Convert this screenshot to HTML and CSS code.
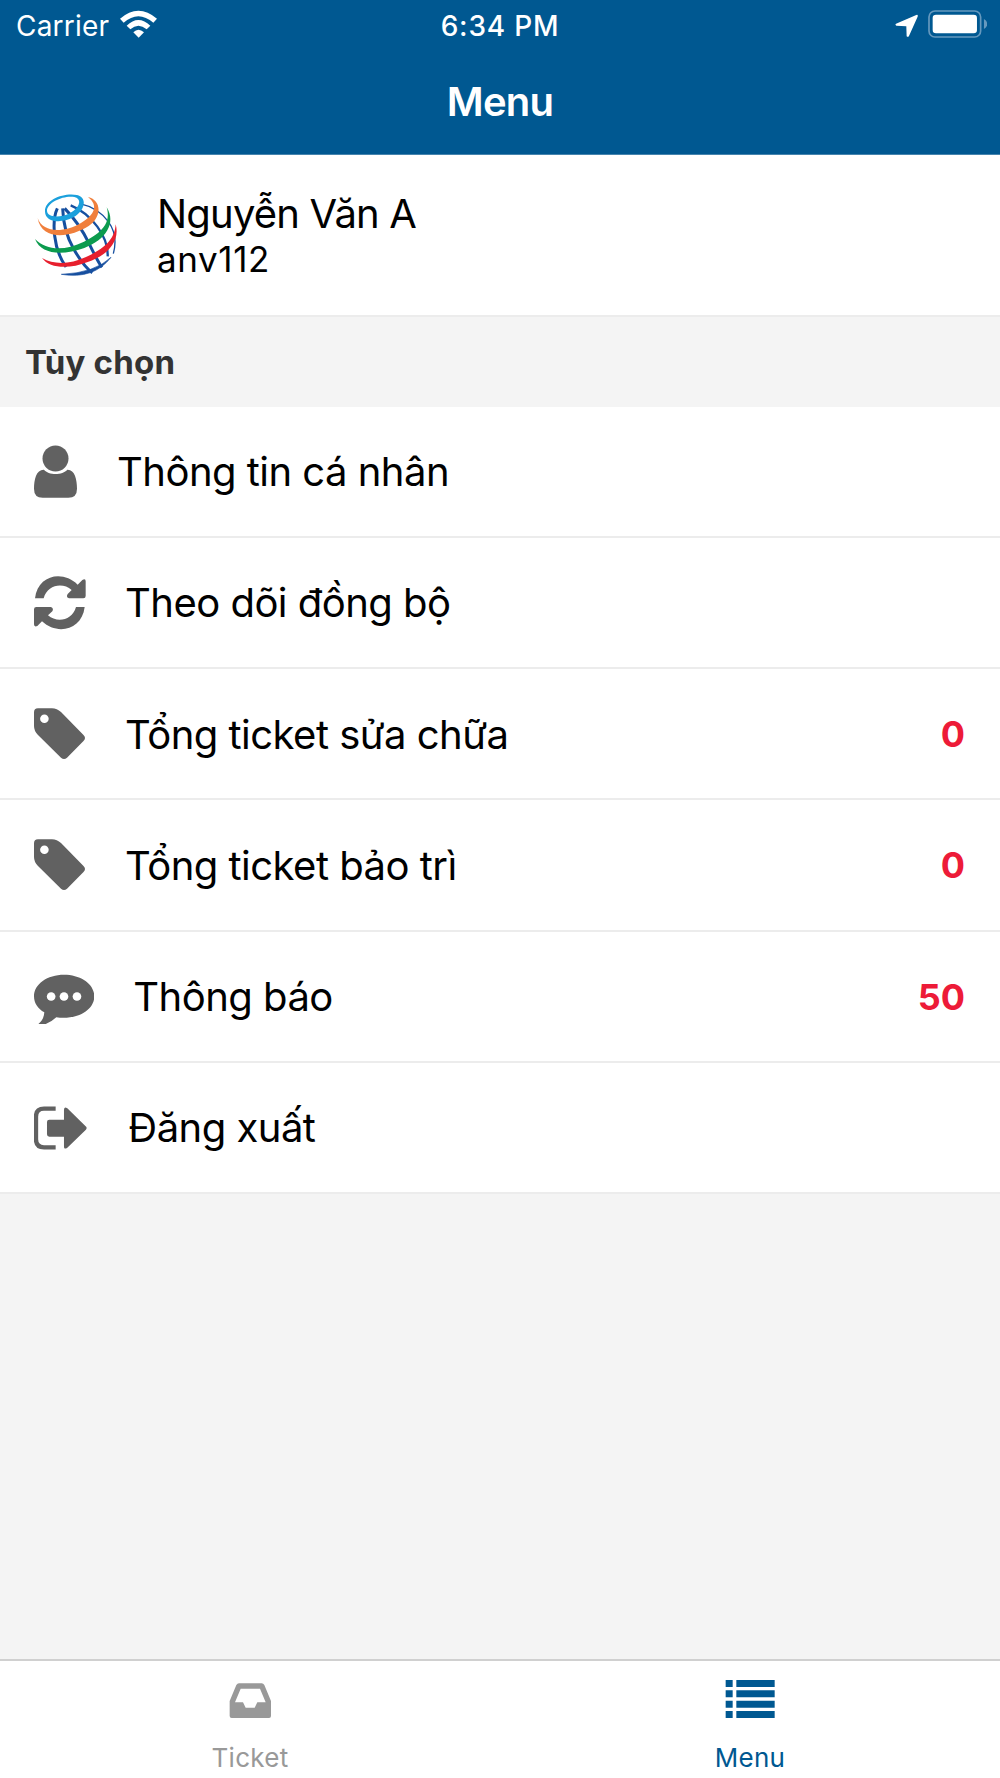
FILE: index.html
```html
<!DOCTYPE html>
<html lang="vi">
<head>
<meta charset="utf-8">
<title>Menu</title>
<link rel="stylesheet" href="styles.css">
</head>
<body>
<div class="screen">
  <header class="header">
    <div class="status">
      <div class="status-left">
        <span class="carrier">Carrier</span>
        <svg class="wifi" viewBox="360 28 111 84"><g fill="#fff"><path d="M360 54Q415 6 471 54L460 66Q415 27 371 66Z"/><path d="M380 75Q415 41 451 75L440 86Q415 65 391 86Z"/><path d="M400 95Q415 80 432 95L416 111Z"/></g></svg>
      </div>
      <span class="time">6:34 PM</span>
      <div class="status-right">
        <svg class="location" viewBox="105 39 70 71"><path d="M108 68L169 42Q175 40 173 47L147 105Q144 110 140 106L139 76L109 74Q104 71 108 68Z" fill="#fff"/></svg>
        <svg class="battery" viewBox="204 30 178 84"><rect x="207" y="33" width="155" height="78" rx="18" fill="none" stroke="#6699be" stroke-width="5"/><rect x="218" y="44" width="133" height="56" rx="10" fill="#fff"/><path d="M372 57Q382 63 382 72T372 87Z" fill="#6699be"/></svg>
      </div>
    </div>
    <h1 class="title">Menu</h1>
  </header>

  <section class="profile">
    <svg class="globe" viewBox="45 39 246 249" fill="none">
      <g stroke="#164f9f" stroke-width="9">
        <path d="M112 82Q98 112 104 165T138 258"/>
        <path d="M128 82Q130 150 161 204T217 275"/>
        <path d="M134 82Q178 127 207 187T246 259"/>
        <path d="M152 73Q199 92 232 137T263 226" stroke-width="7"/>
        <path d="M177 67Q235 80 265 122T280 218" stroke-width="4"/>
      </g>
      <path d="M124 280Q221 296 273 229Q224 276 124 280Z" fill="#164f9f" stroke="#164f9f" stroke-width="2"/>
      <path fill-rule="evenodd" fill="#1ba0dc" d="M75 92C73 56 132 34 171 42C205 50 193 91 160 109C122 129 76 123 75 92ZM81 88C80 110 120 112 149 97C178 81 189 55 163 48C132 42 83 63 81 88Z"/>
      <path fill="#f07f3c" d="M204 48C246 58 246 109 206 135C150 171 65 180 53 112C69 156 132 156 184 125C223 102 237 74 204 48Z"/>
      <path fill="#0c9b4e" d="M260 79C290 127 257 177 193 201C125 225 63 220 45 174C82 211 136 209 192 182C245 156 274 126 260 79Z"/>
      <path fill="#e71f2d" d="M287 130C302 184 256 226 203 243C148 265 89 263 66 231C103 252 150 250 198 228C244 208 285 179 287 130Z"/>
    </svg>
    <div class="who">
      <div class="name">Nguyễn Văn A</div>
      <div class="login">anv112</div>
    </div>
  </section>

  <h2 class="section-title">Tùy chọn</h2>

  <ul class="menu">
    <li class="row">
      <svg class="icon w-user" viewBox="102 403.5 129 162"><g fill="#616161"><circle cx="166.500" cy="444" r="39"/><path d="M132 478C145 495 188 495 202 478C224 477 231 507 231 535Q231 562 205 562H128Q102 562 102 535C102 507 109 477 132 478Z"/></g></svg>
      <span class="label">Thông tin cá nhân</span>
    </li>
    <li class="row">
      <svg class="icon w-sync" viewBox="102 797 156 162"><g fill="#616161"><path d="M105 864C113 795 187 778 233 823L247 809Q257 803 257 813V857Q257 864 250 864H207Q197 861 203 851L215 839C188 815 142 823 131 864Z"/><path d="M254 890C246 959 172 976 126 933L112 947Q102 951 102 942V897Q102 890 109 890H153Q162 893 157 903L144 915C171 939 217 931 228 890Z"/></g></svg>
      <span class="label">Theo dõi đồng bộ</span>
    </li>
    <li class="row">
      <svg class="icon w-tag" viewBox="0 0 51 54"><path fill="#616161" fill-rule="evenodd" d="M4 1.200H18Q23 1.200 27 5L49.500 28Q52.500 31 49.500 34L33 50.700Q30 53.500 27 50.700L4 28Q0 24 0 19V5.200Q0 1.200 4 1.200ZM10.400 7.500A4.300 4.300 0 1 0 10.400 16.100A4.300 4.300 0 1 0 10.400 7.500Z"/></svg>
      <span class="label">Tổng ticket sửa chữa</span>
      <span class="count">0</span>
    </li>
    <li class="row">
      <svg class="icon w-tag" viewBox="0 0 51 54"><path fill="#616161" fill-rule="evenodd" d="M4 1.200H18Q23 1.200 27 5L49.500 28Q52.500 31 49.500 34L33 50.700Q30 53.500 27 50.700L4 28Q0 24 0 19V5.200Q0 1.200 4 1.200ZM10.400 7.500A4.300 4.300 0 1 0 10.400 16.100A4.300 4.300 0 1 0 10.400 7.500Z"/></svg>
      <span class="label">Tổng ticket bảo trì</span>
      <span class="count">0</span>
    </li>
    <li class="row">
      <svg class="icon w-chat" viewBox="102 119 181 162"><path fill="#616161" d="M192 133C243 133 283 161 283 198C283 240 229 270 169 261Q148 281 119 286Q111 286 116 280C127 272 132 259 133 246C114 236 102 219 102 198C102 161 142 133 192 133Z"/><g fill="#fff"><circle cx="153.500" cy="198.500" r="13"/><circle cx="192" cy="198.500" r="13"/><circle cx="231" cy="198.500" r="13"/></g></svg>
      <span class="label">Thông báo</span>
      <span class="count">50</span>
    </li>
    <li class="row">
      <svg class="icon w-exit" viewBox="102 511 160 162"><path fill="none" stroke="#616161" stroke-width="13" stroke-linejoin="round" d="M167 534H132Q108 534 108 558V626Q108 650 132 650H167"/><path fill="#616161" d="M148 567H192V538Q192 526 202 533L257 587Q263 592 257 598L202 651Q192 658 192 648V618H148Q141 618 141 611V574Q141 567 148 567Z"/></svg>
      <span class="label">Đăng xuất</span>
    </li>
  </ul>

  <nav class="tabs">
    <div class="tab">
      <svg class="tab-icon" viewBox="105 112 150 132"><path fill="#999" fill-rule="evenodd" d="M147 131H215Q220 131 223 136L243 184V229Q243 235 237 235H125Q119 235 119 229V184L139 136Q142 131 147 131ZM152 147L135 188H159L167 204H194L202 188H227L210 147Z"/></svg>
      <span class="tab-label">Ticket</span>
    </div>
    <div class="tab tab-active">
      <svg class="tab-icon" viewBox="106 112 150 132"><path fill="#005891" d="M108 121h21v21h-21zM108 152h21v21h-21zM108 183h21v21h-21zM108 214h21v21h-21zM140 121h115v21h-115zM140 152h115v21h-115zM140 183h115v21h-115zM140 214h115v21h-115z"/></svg>
      <span class="tab-label">Menu</span>
    </div>
  </nav>
</div>
</body>
</html>
```
FILE: styles.css
```css
* { box-sizing: border-box; }
body { margin: 0; font-family: Inter, "Noto Sans", sans-serif; color: #000; background: #f4f4f4; }
h1, h2, ul { margin: 0; padding: 0; }
svg { display: block; flex: none; }
.screen { width: 1000px; height: 1778px; display: flex; flex-direction: column; white-space: nowrap; }
.header { height: 155px; background: #005891; border-bottom: 1px solid #4584ae; color: #fff; }
.status { height: 51px; display: grid; grid-template-columns: 1fr auto 1fr; align-items: center; font-size: 28px; line-height: 50px; }
.status-left { display: flex; align-items: center; gap: 11px; padding-left: 16px; }
.carrier { letter-spacing: 0.2px; }
.wifi { width: 37px; height: 28px; margin-top: -3px; }
.time { font-weight: 500; letter-spacing: 0.8px; }
.status-right { display: flex; align-items: center; justify-content: flex-end; gap: 9px; padding-right: 13px; }
.location { width: 23.300px; height: 23.600px; }
.battery { width: 59.300px; height: 28px; margin-top: -3px; }
.title { font-size: 40px; font-weight: 600; line-height: 102px; text-align: center; letter-spacing: -0.8px; }
.profile { height: 160px; background: #fff; display: flex; padding: 39px 35px 0; gap: 40px; }
.globe { width: 82px; height: 83px; }
.name { font-size: 40px; line-height: 40px; letter-spacing: -0.8px; }
.login { font-size: 35px; line-height: 50px; letter-spacing: 0.6px; }
.section-title { height: 91.500px; border-top: 2px solid #ececec; padding-left: 25px; font-size: 33px; line-height: 90px; font-weight: 700; letter-spacing: 0.2px; color: #333; }
.menu { list-style: none; }
.row { height: 131.250px; display: flex; align-items: center; background: #fff; border-bottom: 2px solid #ececec; padding: 1px 35px 0 34px; font-size: 40px; }
.icon { height: 54px; margin-right: 39px; }
.w-user { width: 43px; margin-right: 40px; }
.w-sync { width: 52px; }
.w-tag { width: 51px; margin-right: 40px; }
.w-chat { width: 60.300px; }
.w-exit { width: 53.300px; margin-right: 41px; }
.label { flex: none; line-height: 50px; padding-top: 1px; letter-spacing: -0.52px; }
.count { margin-left: auto; color: #ed1b38; font-size: 36px; font-weight: 700; }
.tabs { margin-top: auto; height: 119px; border-top: 2px solid #d0d0d0; background: #fff; display: grid; grid-template-columns: 1fr 1fr; }
.tab { display: flex; flex-direction: column; align-items: center; color: #999; padding-top: 16px; }
.tab-active { color: #005891; }
.tab-icon { width: 50px; height: 44px; }
.tab-label { font-size: 26px; line-height: 40px; margin-top: 17px; letter-spacing: 0.3px; }
```
